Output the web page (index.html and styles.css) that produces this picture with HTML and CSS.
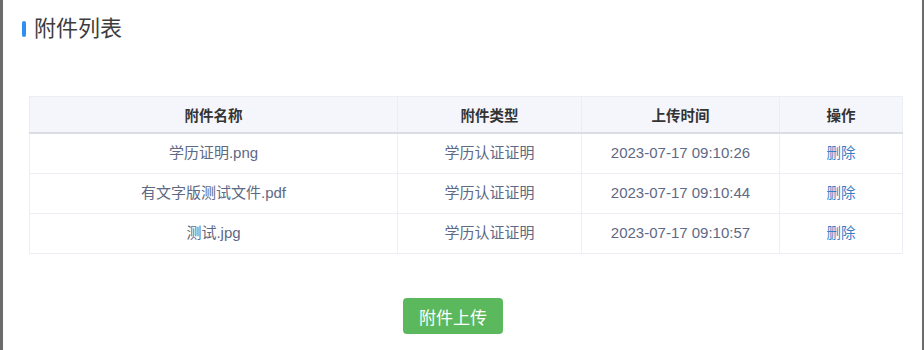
FILE: index.html
```html
<!DOCTYPE html>
<html lang="zh-CN">
<head>
<meta charset="utf-8">
<title>附件列表</title>
<link rel="stylesheet" href="styles.css">
</head>
<body>
<div class="modal">
  <h2 class="title"><span class="bar"></span>附件列表</h2>
  <table class="grid">
    <colgroup>
      <col class="c1"><col class="c2"><col class="c3"><col class="c4">
    </colgroup>
    <thead>
      <tr><th>附件名称</th><th>附件类型</th><th>上传时间</th><th>操作</th></tr>
    </thead>
    <tbody>
      <tr><td>学历证明.png</td><td>学历认证证明</td><td>2023-07-17 09:10:26</td><td><a class="del" href="#">删除</a></td></tr>
      <tr><td>有文字版测试文件.pdf</td><td>学历认证证明</td><td>2023-07-17 09:10:44</td><td><a class="del" href="#">删除</a></td></tr>
      <tr><td>测试.jpg</td><td>学历认证证明</td><td>2023-07-17 09:10:57</td><td><a class="del" href="#">删除</a></td></tr>
    </tbody>
  </table>
  <div class="actions">
    <button class="upload" type="button">附件上传</button>
  </div>
</div>
</body>
</html>
```
FILE: styles.css
```css
html, body {
  margin: 0;
  padding: 0;
  height: 350px;
  overflow: hidden;
  background: #6b6b6b;
  font-family: "Liberation Sans", "Noto Sans CJK SC", sans-serif;
}
.modal {
  margin-left: 3px;
  width: 919px;
  height: 350px;
  background: #fff;
  box-sizing: border-box;
  padding: 13px 0 0 26px;
}
.title {
  margin: 0 0 0 -7px;
  display: flex;
  align-items: center;
  gap: 8px;
  font-size: 22px;
  line-height: 32px;
  font-weight: normal;
  color: #3d3d3d;
}
.bar {
  width: 4px;
  height: 16px;
  border-radius: 2px;
  background: #2f8ff0;
}
.grid {
  margin-top: 51px;
  width: 873px;
  border-collapse: collapse;
  table-layout: fixed;
  font-size: 15px;
}
.c1 { width: 368px; }
.c2 { width: 184px; }
.c3 { width: 198px; }
.c4 { width: 123px; }
.grid th, .grid td {
  border: 1px solid #eceef6;
  text-align: center;
  padding: 0;
}
.grid th {
  height: 35px;
  background: #f5f6fb;
  color: #333;
  font-weight: bold;
  font-size: 14.5px;
  border-bottom: 2px solid #dcdde2;
}
.grid td {
  height: 39px;
  line-height: 38px;
  vertical-align: top;
  color: #5d6985;
}
.del {
  color: #3b7dc4;
  font-size: 14.5px;
  text-decoration: none;
}
.actions {
  width: 873px;
  margin-top: 44px;
  padding-right: 25px;
  box-sizing: border-box;
  display: flex;
  justify-content: center;
}
.upload {
  width: 100px;
  height: 36px;
  border: none;
  border-radius: 4px;
  background: #5cb85c;
  color: #fff;
  font-family: "Liberation Sans", "Noto Sans CJK SC", sans-serif;
  font-size: 17px;
  padding: 0;
}
```
